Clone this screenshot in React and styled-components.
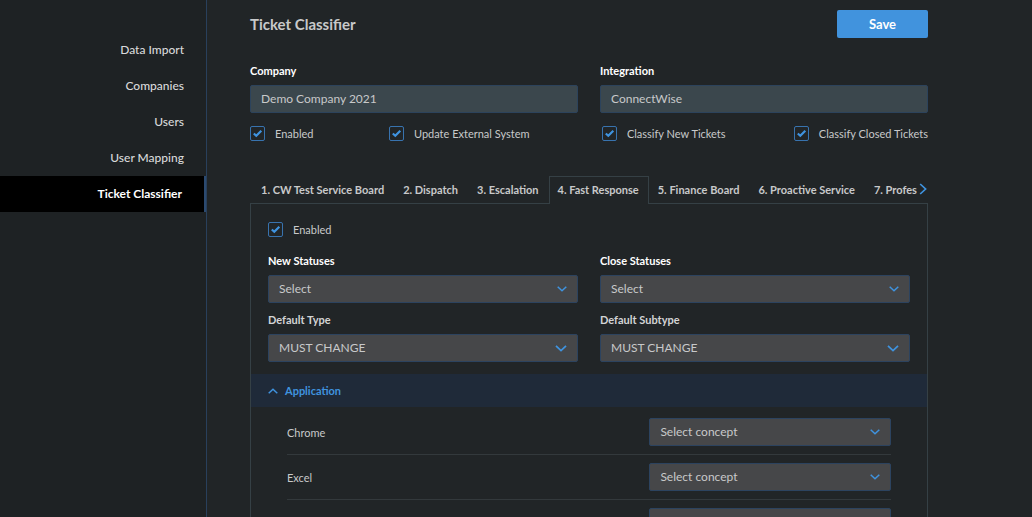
import React, { useState } from "react";
import styled, { createGlobalStyle } from "styled-components";

const menu = [
  "Data Import",
  "Companies",
  "Users",
  "User Mapping",
  "Ticket Classifier",
];

const boards = [
  "1. CW Test Service Board",
  "2. Dispatch",
  "3. Escalation",
  "4. Fast Response",
  "5. Finance Board",
  "6. Proactive Service",
  "7. Professional Services",
];

const concepts = ["Chrome", "Excel", "Outlook"];

function CheckField({ id, label }) {
  const [checked, setChecked] = useState(true);
  return (
    <CheckLabel htmlFor={id}>
      <CheckBox>
        <input
          id={id}
          type="checkbox"
          checked={checked}
          onChange={(e) => setChecked(e.target.checked)}
        />
        {checked && (
          <svg viewBox="0 0 15 15" aria-hidden="true">
            <path d="M3.8 7.5 L6.3 9.8 L11.3 4.8" />
          </svg>
        )}
      </CheckBox>
      {label}
    </CheckLabel>
  );
}

function SelectBox({ id, value, large }) {
  return (
    <SelectWrap $large={large}>
      <select id={id} defaultValue={value}>
        <option>{value}</option>
      </select>
      <svg viewBox="0 0 10 6" aria-hidden="true">
        <path d="M0.7 0.8 L5 4.8 L9.3 0.8" />
      </svg>
    </SelectWrap>
  );
}

function SelectField({ id, label, value, muted }) {
  return (
    <Field>
      <FieldLabel htmlFor={id} $muted={muted}>
        {label}
      </FieldLabel>
      <SelectBox id={id} value={value} large={muted} />
    </Field>
  );
}

function App() {
  const [page, setPage] = useState("Ticket Classifier");
  const [board, setBoard] = useState("4. Fast Response");
  const [open, setOpen] = useState(true);

  return (
    <Layout>
      <GlobalStyle />
      <Sidebar>
        {menu.map((item) => (
          <MenuLink
            href="#"
            key={item}
            $active={item === page}
            onClick={(e) => {
              e.preventDefault();
              setPage(item);
            }}
          >
            {item}
          </MenuLink>
        ))}
      </Sidebar>
      <Main>
        <Header>
          <h1>Ticket Classifier</h1>
          <SaveButton type="button">Save</SaveButton>
        </Header>
        <Columns>
          <Field>
            <FieldLabel htmlFor="company">Company</FieldLabel>
            <TextInput id="company" defaultValue="Demo Company 2021" />
          </Field>
          <Field>
            <FieldLabel htmlFor="integration">Integration</FieldLabel>
            <TextInput id="integration" defaultValue="ConnectWise" />
          </Field>
        </Columns>
        <Options>
          <CheckField id="enabled" label="Enabled" />
          <CheckField id="external" label="Update External System" />
          <CheckField id="newTickets" label="Classify New Tickets" />
          <CheckField id="closedTickets" label="Classify Closed Tickets" />
        </Options>
        <TabBar>
          <TabList role="tablist">
            {boards.map((item) => (
              <Tab
                type="button"
                role="tab"
                key={item}
                aria-selected={item === board}
                $active={item === board}
                onClick={() => setBoard(item)}
              >
                {item}
              </Tab>
            ))}
          </TabList>
          <NextButton type="button" aria-label="Next boards">
            <svg viewBox="0 0 8 12" aria-hidden="true">
              <path d="M1.2 1 L6.6 6 L1.2 11" />
            </svg>
          </NextButton>
        </TabBar>
        <Panel>
          <BoardForm>
            <CheckField id="boardEnabled" label="Enabled" />
            <Columns>
              <SelectField id="newStatuses" label="New Statuses" value="Select" />
              <SelectField id="closeStatuses" label="Close Statuses" value="Select" />
              <SelectField id="type" label="Default Type" value="MUST CHANGE" muted />
              <SelectField id="subtype" label="Default Subtype" value="MUST CHANGE" muted />
            </Columns>
          </BoardForm>
          <SectionButton
            type="button"
            aria-expanded={open}
            $open={open}
            onClick={() => setOpen(!open)}
          >
            <svg viewBox="0 0 10 6" aria-hidden="true">
              <path d="M0.7 5.2 L5 1.2 L9.3 5.2" />
            </svg>
            Application
          </SectionButton>
          {open && (
            <ConceptList>
              {concepts.map((item) => (
                <ConceptRow key={item}>
                  <label htmlFor={item}>{item}</label>
                  <SelectBox id={item} value="Select concept" />
                </ConceptRow>
              ))}
            </ConceptList>
          )}
        </Panel>
      </Main>
    </Layout>
  );
}

const GlobalStyle = createGlobalStyle`
  * {
    box-sizing: border-box;
  }
  body {
    margin: 0;
    background: #212527;
    color: #c8c9ca;
    font-family: Lato, sans-serif;
    font-size: 11px;
  }
  button, input, select {
    font-family: inherit;
    margin: 0;
  }
  svg {
    fill: none;
    stroke: #3f93df;
    stroke-width: 1.5;
  }
`;

const Layout = styled.div`
  display: flex;
  height: 100vh;
`;

const Sidebar = styled.nav`
  flex: none;
  width: 207px;
  padding-top: 32px;
  background: #1e2224;
  border-right: 1px solid #29405c;
`;

const MenuLink = styled.a`
  display: flex;
  align-items: center;
  justify-content: flex-end;
  height: 36px;
  padding: 0 22px 2px 0;
  font-size: 12px;
  font-weight: ${({ $active }) => ($active ? 700 : 500)};
  color: ${({ $active }) => ($active ? "#fff" : "#d8d9da")};
  background: ${({ $active }) => ($active ? "#000" : "transparent")};
  border-right: ${({ $active }) => ($active ? "2px solid #2b4a70" : "none")};
  text-decoration: none;
`;

const Main = styled.main`
  flex: 1;
  min-width: 0;
  padding: 10px 104px 0 43px;
  overflow: auto;
  scrollbar-width: none;
`;

const Header = styled.header`
  display: flex;
  align-items: center;
  justify-content: space-between;
  margin-bottom: 25px;
  h1 {
    margin: 0;
    font-size: 15px;
    font-weight: 700;
  }
`;

const SaveButton = styled.button`
  width: 91px;
  height: 28px;
  border: none;
  border-radius: 2px;
  background: #4193dd;
  color: #fff;
  font-size: 13px;
  font-weight: 700;
`;

const Columns = styled.div`
  display: grid;
  grid-template-columns: 1fr 1fr;
  gap: 9px 22px;
`;

const Field = styled.div`
  display: flex;
  flex-direction: column;
  gap: 6px;
`;

const FieldLabel = styled.label`
  line-height: 16px;
  font-weight: 700;
  color: ${({ $muted }) => ($muted ? "#d3d4d5" : "#fff")};
`;

const TextInput = styled.input`
  width: 100%;
  height: 28px;
  padding: 0 10px 2px;
  border: 1px solid #2c435c;
  border-radius: 2px;
  background: #3b474d;
  color: #c8c9ca;
  font-size: 12px;
`;

const Options = styled.div`
  display: grid;
  grid-template-columns: 139fr 213fr 192fr 134fr;
  margin-top: 12px;
`;

const CheckLabel = styled.label`
  display: flex;
  align-items: center;
  gap: 10px;
  height: 16px;
  white-space: nowrap;
`;

const CheckBox = styled.span`
  position: relative;
  width: 15px;
  height: 15px;
  input {
    display: block;
    appearance: none;
    width: 15px;
    height: 15px;
    border: 1px solid #3873ae;
    border-radius: 2px;
  }
  svg {
    position: absolute;
    inset: 0;
    stroke-width: 2.2;
    pointer-events: none;
  }
`;

const TabBar = styled.div`
  position: relative;
  display: flex;
  height: 28px;
  margin: 35px 0 -1px;
`;

const TabList = styled.div`
  display: flex;
  flex: 1;
  min-width: 0;
  padding-left: 2px;
  overflow: hidden;
`;

const Tab = styled.button`
  flex: none;
  padding: 0 9px 2px 8px;
  border: 1px solid ${({ $active }) => ($active ? "#354045" : "transparent")};
  border-bottom: none;
  background: ${({ $active }) => ($active ? "#212527" : "transparent")};
  color: #c8c9ca;
  font-size: 11px;
  font-weight: 700;
`;

const NextButton = styled.button`
  display: flex;
  align-items: center;
  justify-content: center;
  width: 11px;
  padding: 0 0 3px;
  border: none;
  background: none;
  svg {
    width: 8px;
    height: 12px;
    stroke-width: 1.7;
  }
`;

const Panel = styled.section`
  border: 1px solid #354045;
`;

const BoardForm = styled.div`
  display: flex;
  flex-direction: column;
  gap: 16px;
  padding: 17px 17px 12px;
`;

const SelectWrap = styled.div`
  position: relative;
  select {
    display: block;
    appearance: none;
    width: 100%;
    height: 28px;
    padding: 0 28px 2px 10px;
    border: 1px solid #2c435f;
    border-radius: 2px;
    background: #464749;
    color: #c8c9ca;
    font-size: 12px;
  }
  svg {
    position: absolute;
    top: 11px;
    right: 11px;
    width: ${({ $large }) => ($large ? "12px" : "10px")};
    height: ${({ $large }) => ($large ? "7px" : "6px")};
    pointer-events: none;
  }
`;

const SectionButton = styled.button`
  display: flex;
  align-items: center;
  gap: 7px;
  width: 100%;
  height: 33px;
  padding: 0 17px;
  border: none;
  background: #1f2a39;
  color: #3f93df;
  font-size: 11px;
  font-weight: 700;
  svg {
    width: 10px;
    height: 6px;
    transform: ${({ $open }) => ($open ? "none" : "rotate(180deg)")};
  }
`;

const ConceptList = styled.div`
  padding: 3px 36px;
`;

const ConceptRow = styled.div`
  display: grid;
  grid-template-columns: 3fr 2fr;
  align-items: center;
  height: 45px;
  border-bottom: 1px solid #33393c;
`;

export default App;
